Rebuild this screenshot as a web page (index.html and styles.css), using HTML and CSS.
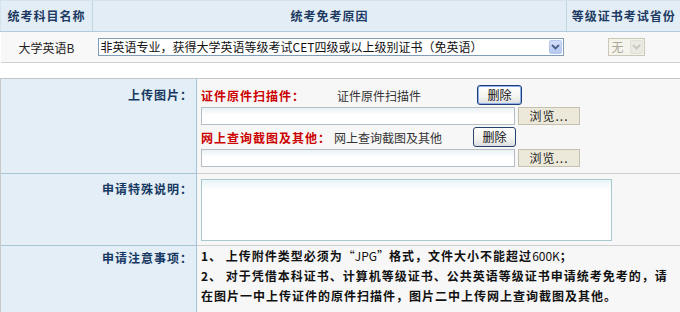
FILE: index.html
```html
<!DOCTYPE html>
<html lang="zh-CN">
<head>
<meta charset="utf-8">
<title>统考免考申请</title>
<link rel="stylesheet" href="styles.css">
</head>
<body>
<table class="t1">
  <colgroup><col class="c1"><col class="c2"><col class="c3"></colgroup>
  <tr class="hd">
    <th>统考科目名称</th>
    <th>统考免考原因</th>
    <th class="last">等级证书考试省份</th>
  </tr>
  <tr class="rw">
    <td class="subj">大学英语B</td>
    <td class="reason">
      <div class="sel">
        <span class="sel-text">非英语专业，获得大学英语等级考试CET四级或以上级别证书（免英语）</span>
        <span class="arrow"><svg width="9" height="6" viewBox="0 0 9 6"><path d="M1 1 L4.5 4.5 L8 1" fill="none" stroke="#4a5f8a" stroke-width="1.8"/></svg></span>
      </div>
    </td>
    <td class="prov">
      <div class="sel dis">
        <span class="sel-text">无</span>
        <span class="arrow"><svg width="9" height="6" viewBox="0 0 9 6"><path d="M1 1 L4.5 4.5 L8 1" fill="none" stroke="#c9c7bd" stroke-width="1.8"/></svg></span>
      </div>
    </td>
  </tr>
</table>

<table class="t2">
  <colgroup><col class="l"><col class="r"></colgroup>
  <tr class="r1">
    <td class="lab">上传图片：</td>
    <td class="val">
      <div class="line">
        <span class="red">证件原件扫描件：</span>
        <span class="name n1">证件原件扫描件</span>
        <button class="del focus" type="button">删除</button>
      </div>
      <div class="fline">
        <span class="inp"></span><button class="browse" type="button">浏览...</button>
      </div>
      <div class="line">
        <span class="red">网上查询截图及其他：</span>
        <span class="name n2">网上查询截图及其他</span>
        <button class="del" type="button">删除</button>
      </div>
      <div class="fline">
        <span class="inp"></span><button class="browse" type="button">浏览...</button>
      </div>
    </td>
  </tr>
  <tr class="r2">
    <td class="lab">申请特殊说明：</td>
    <td class="val"><div class="ta"></div></td>
  </tr>
  <tr class="r3">
    <td class="lab">申请注意事项：</td>
    <td class="val notes">
      1、 上传附件类型必须为<span class="lt">“JPG”</span>格式，文件大小不能超过<span class="lt">600K</span>；<br>
      2、 对于凭借本科证书、计算机等级证书、公共英语等级证书申请统考免考的，请<br>在图片一中上传证件的原件扫描件，图片二中上传网上查询截图及其他。
    </td>
  </tr>
</table>
</body>
</html>
```

FILE: styles.css
```css
html, body {
  margin: 0;
  padding: 0;
  background: #ffffff;
}
body {
  font-family: "Noto Sans CJK SC", "Liberation Sans", sans-serif;
  font-size: 12px;
  color: #222;
  width: 680px;
  overflow: hidden;
}

/* ---------- top table ---------- */
.t1 {
  width: 680px;
  border-collapse: collapse;
  table-layout: fixed;
}
.t1 .c1 { width: 92px; }
.t1 .c2 { width: 474px; }
.t1 .c3 { width: 114px; }

.t1 th {
  height: 30px;
  padding: 0;
  background: #e2edf6;
  color: #1d3a62;
  font-weight: bold;
  letter-spacing: 1px;
  text-align: center;
  border-top: 1px solid #d6e2ec;
  border-bottom: 1px solid #b3cadb;
  border-left: 1px solid #c3d6e4;
  line-height: 20px;
}
.t1 th:first-child { border-left: 1px solid #d6e2ec; }

.t1 td {
  height: 30px;
  padding: 0;
  background: #f8f8f8;
  border-bottom: 1px solid #d0d0d0;
  vertical-align: middle;
}
.t1 .subj {
  text-align: center;
  color: #222;
}
.t1 .reason { padding-left: 5px; }
.t1 .prov { padding-left: 41px; }

.sel {
  display: flex;
  align-items: center;
  height: 16px;
  width: 464px;
  border: 1px solid #7f9db9;
  background: #fff;
  box-sizing: content-box;
}
.sel-text {
  flex: 1;
  padding-left: 2px;
  white-space: nowrap;
  overflow: hidden;
  color: #111;
  line-height: 16px;
}
.arrow {
  width: 13px;
  height: 14px;
  margin-right: 1px;
  border: 1px solid #b7c7ee;
  border-radius: 2px;
  background: linear-gradient(#d3defa, #b5c7f1);
  display: flex;
  align-items: center;
  justify-content: center;
  box-sizing: border-box;
}
.sel.dis {
  width: 35px;
  border-color: #cbc8b8;
  background: #f4f3ec;
}
.sel.dis .sel-text {
  color: #aca899;
  padding-left: 3px;
}
.sel.dis .arrow {
  border-color: #e2e0d6;
  background: #ebeae3;
}

/* ---------- bottom table ---------- */
.t2 {
  margin-top: 15px;
  width: 680px;
  border-collapse: collapse;
  table-layout: fixed;
}
.t2 .l { width: 196px; }
.t2 .r { width: 484px; }

.t2 td {
  padding: 0;
  vertical-align: top;
}
.t2 .lab {
  background: #e3eef6;
  color: #163862;
  font-weight: bold;
  letter-spacing: 1px;
  text-align: right;
  padding-right: 3px;
  border-left: 1px solid #c9c9c9;
  border-right: 1px solid #a6c4d7;
  border-top: 1px solid #a9c5d8;
  white-space: nowrap;
}
.t2 .val {
  background: #f7f7f7;
  padding-left: 4px;
  border-top: 1px solid #cfcfcf;
  border-right: 1px solid #d4d4d4;
}
.t2 .r1 .lab, .t2 .r1 .val { border-top-color: #c6c6c6; }

.r1 td { height: 94px; }
.r1 .lab { padding-top: 5px; line-height: 22px; height: 89px; }
.r1 .val { padding-top: 5px; height: 89px; }

.line {
  display: flex;
  align-items: center;
  height: 22px;
  white-space: nowrap;
}
.red {
  color: #cc0000;
  font-weight: bold;
  letter-spacing: 1px;
}
.name { color: #333; }
.n1 { width: 140px; margin-left: 32px; }
.n2 { width: 139px; margin-left: 3px; }

.del {
  font-family: inherit;
  font-size: 12px;
  color: #111;
  height: 20px;
  width: 45px;
  padding: 0;
  border: 1px solid #27446e;
  border-radius: 3px;
  background: linear-gradient(#ffffff, #f3f3ef 60%, #dcdde2);
  line-height: 18px;
}
.del.focus {
  border-color: #1d3e78;
  box-shadow: inset 0 0 0 1px #8cb0e6;
}
.r1 .line:nth-of-type(3) .del { width: 43px; }

.fline {
  display: flex;
  align-items: center;
  height: 20px;
}
.inp {
  display: block;
  width: 312px;
  height: 16px;
  border: 1px solid #b5bec4;
  background: linear-gradient(#eaf1f4, #ffffff 7px);
}
.browse {
  font-family: inherit;
  font-size: 12px;
  color: #222;
  margin-left: 3px;
  width: 62px;
  height: 18px;
  padding: 0;
  border: 1px solid #c4c1b1;
  background: #ece9da;
  letter-spacing: 1px;
  line-height: 16px;
}

.r2 td { height: 71px; }
.r2 .lab { padding-top: 5px; line-height: 20px; height: 66px; }
.r2 .val { padding-top: 5px; height: 66px; }
.ta {
  width: 409px;
  height: 60px;
  border: 1px solid #a9c9d0;
  background: linear-gradient(#e8f5f7, #ffffff 10px);
}

.r3 .lab { padding-top: 2px; line-height: 20px; height: 70px; }
.notes {
  padding-top: 2px;
  line-height: 20px;
  font-weight: bold;
  letter-spacing: 1px;
  color: #111;
  white-space: nowrap;
}
.notes .lt {
  font-weight: normal;
  letter-spacing: 0;
}
```
